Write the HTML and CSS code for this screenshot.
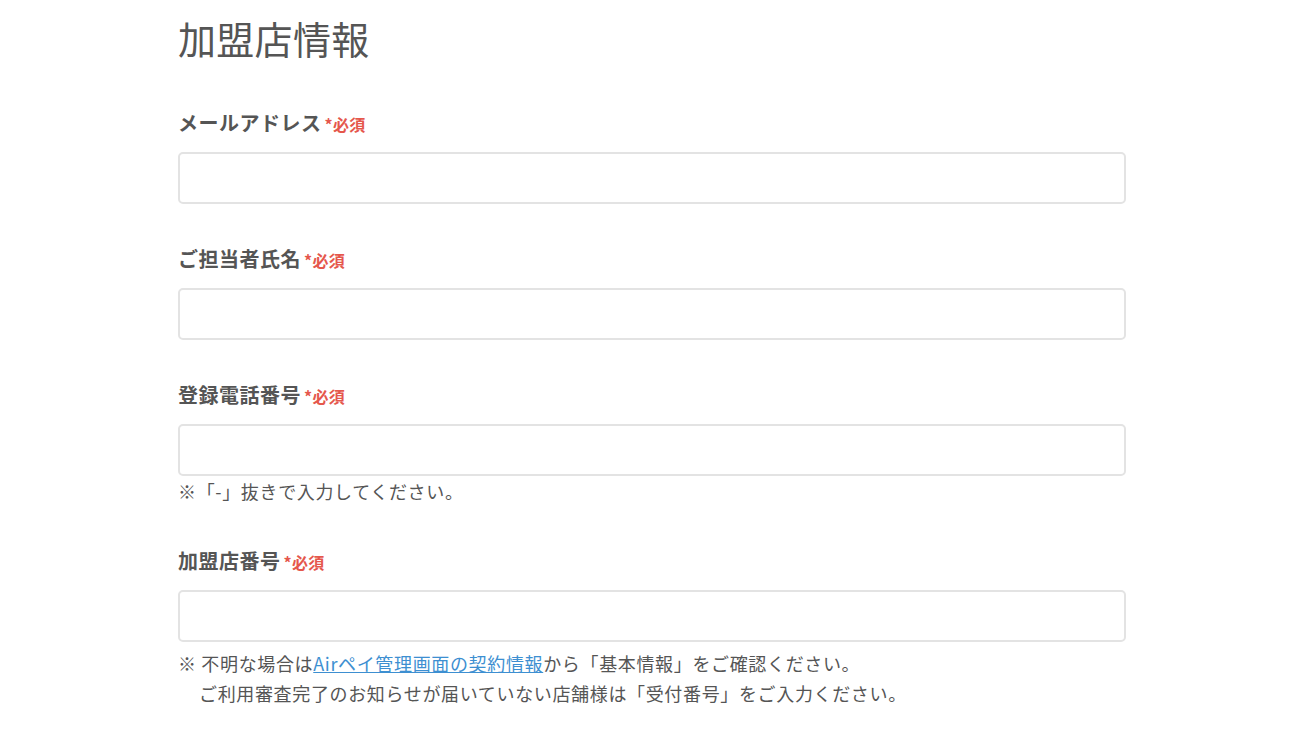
FILE: index.html
```html
<!DOCTYPE html>
<html lang="ja">

<head>
    <meta charset="UTF-8">
    <meta name="viewport" content="width=device-width, initial-scale=1.0">
    <title>加盟店情報</title>
    <link rel="stylesheet" href="styles.css">
</head>

<body>

    <div class="container">
        <h1 class="page-title">加盟店情報</h1>

        <form class="shop-form">
            <div class="field">
                <label class="field-label" for="mail">メールアドレス<span class="required">*必須</span></label>
                <input type="text" id="mail" class="field-input">
            </div>

            <div class="field">
                <label class="field-label" for="name">ご担当者氏名<span class="required">*必須</span></label>
                <input type="text" id="name" class="field-input">
            </div>

            <div class="field">
                <label class="field-label" for="tel">登録電話番号<span class="required">*必須</span></label>
                <input type="text" id="tel" class="field-input">
                <p class="note">※「-」抜きで入力してください。</p>
            </div>

            <div class="field">
                <label class="field-label" for="shop">加盟店番号<span class="required">*必須</span></label>
                <input type="text" id="shop" class="field-input">
                <div class="note-block">
                    <p class="note">※ 不明な場合は<a href="#">Airペイ管理画面の契約情報</a>から「基本情報」をご確認ください。</p>
                    <p class="note note-indent">ご利用審査完了のお知らせが届いていない店舗様は「受付番号」をご入力ください。</p>
                </div>
            </div>
        </form>
    </div>

</body>

</html>
```

FILE: styles.css
```css
body {
    font-family: "Noto Sans CJK JP", "Noto Sans", sans-serif;
    margin: 0;
    padding: 0;
    background-color: #fff;
    color: #555;
}

.container {
    width: 948px;
    margin: 0 0 0 178px;
}

.page-title {
    margin: 14px 0 0;
    font-size: 38px;
    line-height: 48px;
    font-weight: normal;
    letter-spacing: 0.3px;
}

.shop-form {
    margin-top: 46px;
}

.field {
    margin-bottom: 40px;
}

.field-label {
    display: block;
    font-size: 20px;
    line-height: 30px;
    font-weight: bold;
    letter-spacing: 0.5px;
    margin-bottom: 14px;
}

.required {
    color: #e5574c;
    font-size: 16px;
    line-height: 16px;
    letter-spacing: 0.3px;
    margin-left: 3px;
}

.field-input {
    display: block;
    box-sizing: border-box;
    width: 100%;
    height: 52px;
    border: 2px solid #e3e3e3;
    border-radius: 5px;
    padding: 0 12px;
    font-size: 18px;
    outline: none;
}

.note {
    margin: 0;
    font-size: 18px;
    line-height: 30px;
    letter-spacing: 0.65px;
}

.note-block {
    margin-top: 6px;
}

.note-indent {
    padding-left: 21px;
}

.note a {
    color: #3d8fd1;
    text-decoration: underline;
}
```
